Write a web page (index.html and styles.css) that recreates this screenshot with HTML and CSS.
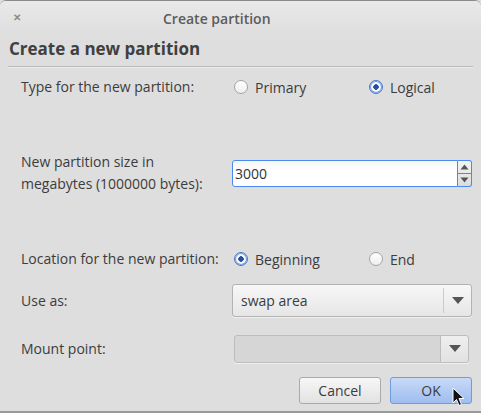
FILE: index.html
```html
<!DOCTYPE html>
<html>
<head>
<meta charset="utf-8">
<link rel="stylesheet" href="styles.css">
</head>
<body>
<div class="window">
  <div class="titlebar">
    <span class="close">&#x2715;</span>
    <span class="title">Create partition</span>
  </div>
  <div class="heading">Create a new partition</div>
  <div class="sep"></div>
  <div class="form">
    <div class="label r1">Type for the new partition:</div>
    <div class="radios r1">
      <label class="radio"><span class="circle"></span>Primary</label>
      <label class="radio"><span class="circle on"></span>Logical</label>
    </div>

    <div class="label r2">New partition size in<br>megabytes (1000000 bytes):</div>
    <div class="spin r2">
      <div class="entry">3000</div>
      <div class="spinbtns">
        <div class="sb up"><svg width="9" height="6" viewBox="0 0 9 6"><path d="M0.5 5.5 L4.5 0.5 L8.5 5.5 Z" fill="#555"/></svg></div>
        <div class="sb down"><svg width="9" height="6" viewBox="0 0 9 6"><path d="M0.5 0.5 L4.5 5.5 L8.5 0.5 Z" fill="#555"/></svg></div>
      </div>
    </div>

    <div class="label r3">Location for the new partition:</div>
    <div class="radios r3">
      <label class="radio"><span class="circle on"></span>Beginning</label>
      <label class="radio"><span class="circle"></span>End</label>
    </div>

    <div class="label r4">Use as:</div>
    <div class="combo r4">
      <span class="ctext">swap area</span>
      <span class="arrow"><svg width="12" height="7" viewBox="0 0 12 7"><path d="M0 0 L12 0 L6 7 Z" fill="#555"/></svg></span>
    </div>

    <div class="label r5">Mount point:</div>
    <div class="combo disabled r5">
      <span class="ctext"></span>
      <span class="arrow"><svg width="12" height="7" viewBox="0 0 12 7"><path d="M0 0 L12 0 L6 7 Z" fill="#555"/></svg></span>
    </div>
  </div>
  <div class="buttons">
    <button class="btn">Cancel</button>
    <button class="btn ok">OK</button>
  </div>
  <svg class="cursor" width="14" height="20" viewBox="0 0 14 20"><path d="M1 1 L1 16 L4.5 12.5 L7 18.5 L9.5 17.5 L7 11.5 L12 11.5 Z" fill="#111" stroke="#fff" stroke-width="1"/></svg>
</div>
</body>
</html>
```
FILE: styles.css
```css
html, body {
  margin: 0;
  padding: 0;
  background: #dedede;
}
.window {
  position: relative;
  width: 481px;
  height: 413px;
  box-sizing: border-box;
  background: #dedede;
  border-top: 1px solid #8a8a8a;
  border-bottom: 2px solid #9a9a9a;
  border-radius: 6px 6px 0 0;
  font-family: "Open Sans", "Noto Sans", sans-serif;
  font-size: 14px;
  color: #2e3436;
  overflow: hidden;
}
.titlebar {
  height: 34px;
  display: flex;
  align-items: center;
  padding-left: 163px;
  position: relative;
  background: linear-gradient(#e9e9e9, #dedede);
}
.title {
  color: #5c5c5c;
  font-size: 14px;
  font-weight: 600;
}
.close {
  position: absolute;
  left: 13px;
  top: 9px;
  font-size: 10px;
  color: #8a8a8a;
  font-weight: bold;
}
.heading {
  padding-left: 9px;
  font-size: 17px;
  font-weight: bold;
  color: #404040;
  height: 28px;
  line-height: 28px;
}
.sep {
  margin: 3px 8px 0 8px;
  height: 1px;
  background: #b9b9b9;
  border-bottom: 1px solid #ececec;
}
.form {
  display: grid;
  grid-template-columns: 211px 240px;
  grid-template-rows: 36px 136px 36px 47px 49px;
  padding-left: 21px;
  margin-top: 1px;
  align-items: center;
}
.label {
  color: #3c3c3c;
  line-height: 22px;
}
.r1 { grid-row: 1; }
.r2 { grid-row: 2; }
.r3 { grid-row: 3; }
.r4 { grid-row: 4; }
.r5 { grid-row: 5; }
.radios {
  display: grid;
  grid-template-columns: 135px 100px;
  padding-left: 2px;
}
.radio {
  display: flex;
  align-items: center;
  gap: 7px;
  color: #3c3c3c;
}
.circle {
  width: 12px;
  height: 12px;
  border-radius: 50%;
  border: 1px solid #a4a4a4;
  background: linear-gradient(#ffffff, #eeeeee);
  box-sizing: content-box;
  position: relative;
}
.circle.on {
  border-color: #4a78c9;
  background: radial-gradient(circle, #2a4f9a 0 2.5px, #ffffff 3px, #c8d9f5 100%);
  box-shadow: inset 0 0 0 1px #7aa2e6;
}
.spin {
  display: flex;
  height: 27px;
  margin-top: 1px;
}
.entry {
  flex: 0 0 226px;
  box-sizing: border-box;
  border: 1px solid #4a8af0;
  border-radius: 3px 0 0 3px;
  background: linear-gradient(#f6f6f6, #ffffff 40%);
  padding-left: 2px;
  line-height: 25px;
  font-size: 14px;
  color: #2e3436;
}
.spinbtns {
  flex: 0 0 14px;
  display: flex;
  flex-direction: column;
  box-sizing: border-box;
  border: 1px solid #4a8af0;
  border-left: none;
  border-radius: 0 3px 3px 0;
  background: linear-gradient(#f4f4f4, #dcdcdc);
}
.sb {
  flex: 1;
  display: flex;
  align-items: center;
  justify-content: center;
}
.sb.up {
  border-bottom: 1px solid #4a8af0;
}
.combo {
  display: flex;
  height: 33px;
  box-sizing: border-box;
  border: 1px solid #b3b3b3;
  border-radius: 3px;
  background: linear-gradient(#f7f7f7, #e6e6e6);
  box-shadow: 0 1px 0 #f0f0f0;
}
.combo .ctext {
  flex: 1;
  padding-left: 8px;
  line-height: 31px;
  color: #3c3c3c;
  font-size: 14px;
}
.combo .arrow {
  flex: 0 0 27px;
  display: flex;
  align-items: center;
  justify-content: center;
  border-left: 1px solid #cacaca;
  margin: 3px 0;
}
.combo.disabled {
  margin-left: 2px;
  margin-right: 3px;
  height: 28px;
  background: #d6d6d6;
  border-color: #bdbdbd;
}
.combo.disabled .arrow {
  margin: 0;
  background: linear-gradient(#efefef, #e2e2e2);
  border-left: 1px solid #bdbdbd;
  border-radius: 0 3px 3px 0;
}
.buttons {
  display: flex;
  justify-content: flex-end;
  gap: 9px;
  padding-right: 9px;
  margin-top: 4px;
}
.btn {
  width: 82px;
  height: 27px;
  border: 1px solid #aaaaaa;
  border-radius: 3px;
  background: linear-gradient(#f7f7f7, #e2e2e2);
  font-family: inherit;
  font-size: 14px;
  color: #3c3c3c;
  padding: 0;
}
.btn.ok {
  border-color: #6f9be0;
  background: linear-gradient(#c8daf7, #9ebdf0);
}
.cursor {
  position: absolute;
  left: 452px;
  top: 386px;
}
```
